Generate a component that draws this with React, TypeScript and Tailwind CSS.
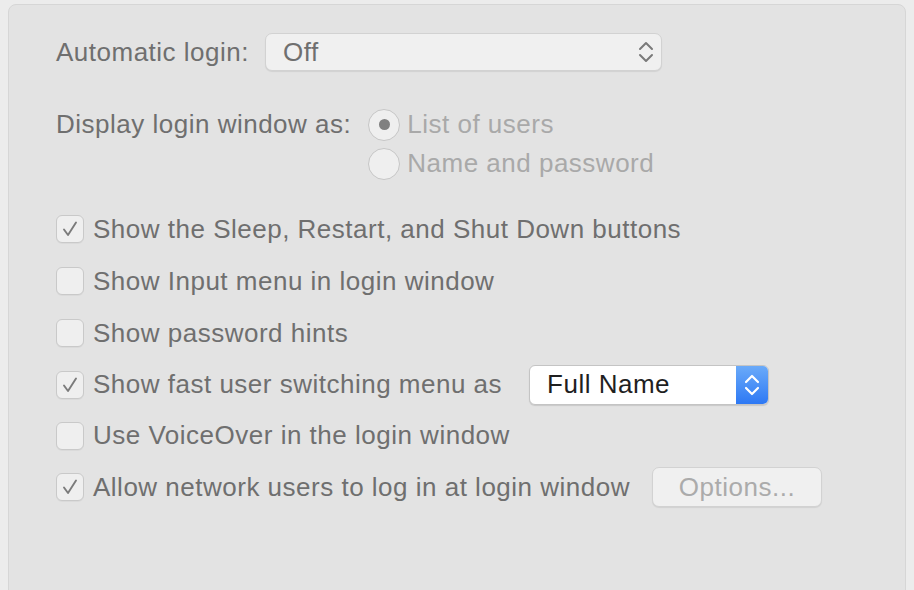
import React from "react";

function Check() {
  return (
    <svg width="18" height="18" viewBox="0 0 18 18" fill="none">
      <path d="M3 9.5 L7 15 L15 2.5" stroke="#7b7b7b" strokeWidth="1.9" strokeLinecap="round" strokeLinejoin="round" />
    </svg>
  );
}

function Checkbox({ checked }: { checked?: boolean }) {
  return (
    <div className="w-[28px] h-[28px] rounded-[6px] border border-[#c9c9c9] bg-[#efefef] shadow-[0_1px_0_rgba(0,0,0,0.04)] flex items-center justify-center shrink-0">
      {checked && <Check />}
    </div>
  );
}

function Radio({ selected }: { selected?: boolean }) {
  return (
    <div className="w-[32px] h-[32px] rounded-full border border-[#c6c6c6] bg-[#efefef] flex items-center justify-center shrink-0">
      {selected && <div className="w-[11px] h-[11px] rounded-full bg-[#808080]" />}
    </div>
  );
}

function Chevrons({ color, width = 2 }: { color: string; width?: number }) {
  return (
    <svg width="18" height="26" viewBox="0 0 18 26" fill="none">
      <path d="M3 10 L9 4 L15 10" stroke={color} strokeWidth={width} strokeLinecap="round" strokeLinejoin="round" />
      <path d="M3 16 L9 22 L15 16" stroke={color} strokeWidth={width} strokeLinecap="round" strokeLinejoin="round" />
    </svg>
  );
}

const rows = [
  { label: "Show the Sleep, Restart, and Shut Down buttons", checked: true, h: "h-[52px]" },
  { label: "Show Input menu in login window", h: "h-[52px]" },
  { label: "Show password hints", h: "h-[52px]" },
  { label: "Show fast user switching menu as", checked: true, popup: true, h: "h-[51px]" },
  { label: "Use VoiceOver in the login window", h: "h-[51px]" },
  { label: "Allow network users to log in at login window", checked: true, options: true, h: "h-[52px]" },
];

export default function App() {
  return (
    <div
      className="w-[914px] h-[590px] bg-[#ececec] pt-[4px] px-[8px] overflow-hidden text-[26px] tracking-[0.5px] text-[#6f6f6f]"
      style={{ fontFamily: '"Liberation Sans", Arial, sans-serif' }}
    >
      <div className="h-[600px] rounded-t-[8px] border border-[#d6d6d6] bg-[#e3e3e3] pl-[47px] pt-[28px]">
        <div className="flex items-center h-[38px]">
          <span className="mr-[16px]">Automatic login:</span>
          <div className="w-[397px] h-[38px] rounded-[7px] bg-[#f0f0f0] border border-[#d2d2d2] shadow-[0_1px_1px_rgba(0,0,0,0.08)] flex items-center justify-between pl-[17px] pr-[6px]">
            <span className="text-[#6f6f6f]">Off</span>
            <Chevrons color="#7a7a7a" />
          </div>
        </div>

        <div className="flex mt-[34px]">
          <span className="h-[39px] flex items-center mr-[17px]">Display login window as:</span>
          <div className="flex flex-col text-[#a9a9a9]">
            <div className="h-[39px] flex items-center gap-[7px]">
              <Radio selected />
              <span>List of users</span>
            </div>
            <div className="h-[39px] flex items-center gap-[7px]">
              <Radio />
              <span>Name and password</span>
            </div>
          </div>
        </div>

        <div className="flex flex-col mt-[20px]">
          {rows.map((r) => (
            <div key={r.label} className={`${r.h} flex items-center`}>
              <Checkbox checked={r.checked} />
              <span className="ml-[9px]">{r.label}</span>
              {r.popup && (
                <div className="ml-[27px] w-[240px] h-[40px] rounded-[6px] bg-white border border-[#c4c4c4] shadow-[0_1px_1px_rgba(0,0,0,0.12)] flex items-stretch overflow-hidden">
                  <span className="flex-1 flex items-center pl-[17px] text-[#1f1f1f]">Full Name</span>
                  <div className="w-[32px] bg-gradient-to-b from-[#6aaaf9] to-[#2d78f4] flex items-center justify-center">
                    <Chevrons color="#ffffff" width={2.2} />
                  </div>
                </div>
              )}
              {r.options && (
                <div className="ml-[22px] w-[170px] h-[40px] rounded-[7px] bg-[#f0f0f0] border border-[#d2d2d2] shadow-[0_1px_1px_rgba(0,0,0,0.08)] flex items-center justify-center text-[#ababab]">
                  Options...
                </div>
              )}
            </div>
          ))}
        </div>
      </div>
    </div>
  );
}
